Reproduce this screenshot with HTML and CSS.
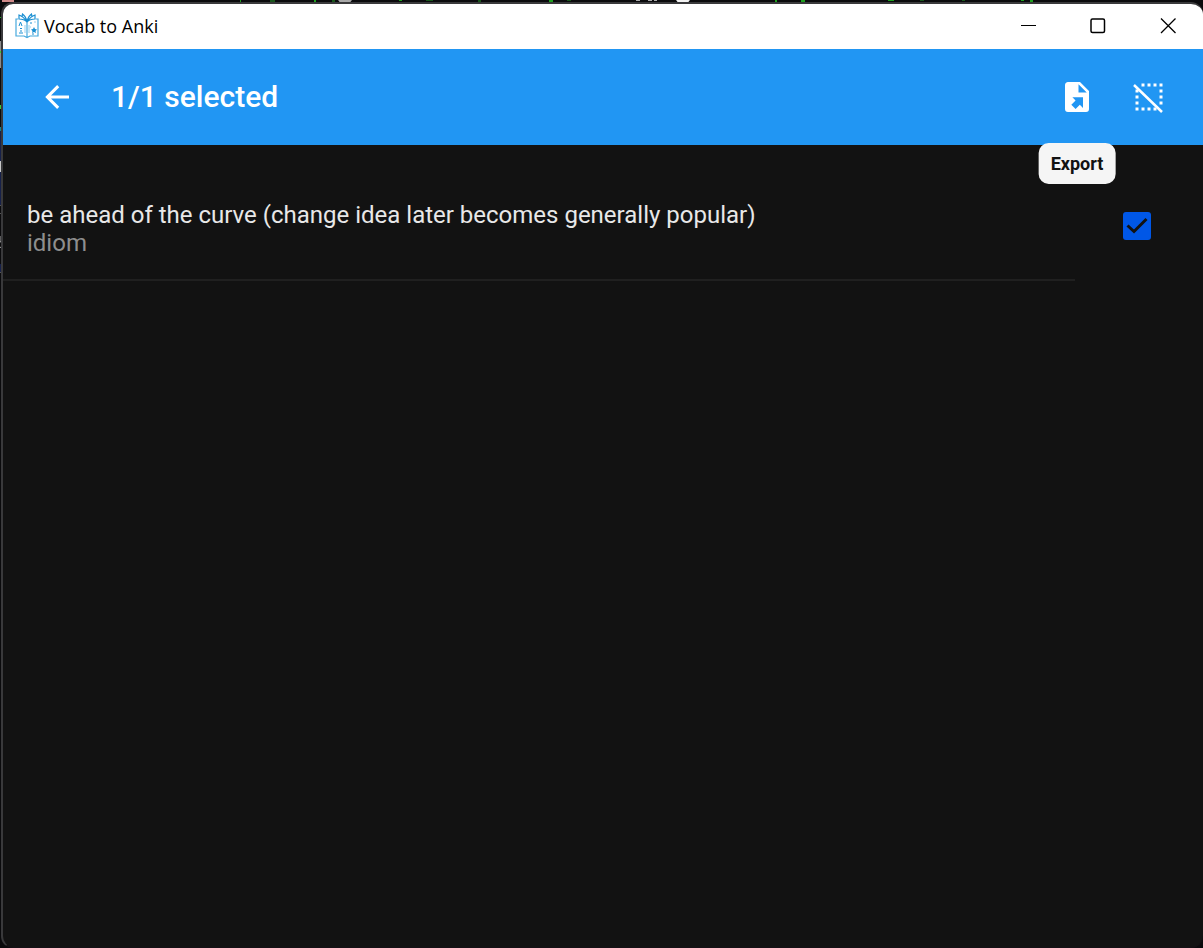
FILE: index.html
```html
<!DOCTYPE html>
<html lang="en">
<head>
<meta charset="utf-8">
<title>Vocab to Anki</title>
<meta name="viewport" content="width=device-width, initial-scale=1">
<link rel="stylesheet" href="styles.css">
</head>
<body class="desktop">
<svg class="behind behind-left" width="4" height="300" aria-hidden="true">
  <path fill="#18a818" d="M0 17h4v1H0z"/>
  <path fill="#8c8c8c" d="M0 41h4v27H0z"/>
  <path fill="#37c937" d="M0 51h3v2H0zM1 61h3v2H1zM0 105h3v4H0z"/>
  <path fill="#15808c" d="M0 127h4v4H0z"/>
  <path fill="#16204a" d="M0 131h4v75H0zM0 264h4v8H0z"/>
  <path fill="#c8c8c8" d="M0 161h2v11H0z"/>
  <path fill="#555" d="M0 205h4v1H0zM0 213h4v1H0zM0 272h4v1H0z"/>
  <path fill="none" stroke="#aaa" d="M0 236v6l3-1M0 247l3 2"/>
</svg>
<svg class="behind behind-top" width="1203" height="4" aria-hidden="true">
  <path fill="#d08a8a" d="M2 0h12v2H2z"/>
  <path fill="#1ca01c" d="M240 0h1v2h-1zM314 0h2v3h-2zM399 0h3v1h-3zM549 0h4v2h-4zM775 0h2v2h-2zM801 0h4v2h-4zM888 0h6v1h-6zM1021 0h3v1h-3zM1030 0h3v2h-3z"/>
  <path fill="#18551a" d="M270 0h5v2h-5zM332 0h3v2h-3zM426 0h7v1h-7zM478 0h3v2h-3zM567 0h4v1h-4zM920 0h4v1h-4zM962 0h3v1h-3z"/>
  <circle fill="#a8a8a8" cx="345" cy="-4" r="8"/>
  <circle fill="#f2f2f2" cx="683" cy="-4" r="8"/>
  <path fill="#aaa" d="M636 0h4v1h-4zM648 0h4v1h-4zM654 0h3v1h-3z"/>
</svg>
<div class="window">
  <header class="titlebar">
    <svg class="logo" width="24" height="26" viewBox="0 0 24 26" fill="none" stroke="#1b8fd2" stroke-width="1.2" aria-hidden="true">
      <path d="M3 6H1v17h8l3 1.500 3-1.500h8V6h-2M12 8v17" stroke="#47a9de"/>
      <path d="M12 9C10 6 7 3 4 2v4c4 0 6 1 8 3M12 9c2-3 5-6 8-7v4c-4 0-6 1-8 3M12 8C11 5 9 2 7.500 1l-.5 3M12 8c1-3 3-6 4.500-7l.5 3"/>
      <path d="M4 13l1.500-4L7 13M5 15.500h2M4 20h4M5 18h2M15 10h2M17 21h2" stroke-width="1"/>
      <path d="M19 14l1 2 2 .5-1.500 1.500.5 2-2-1-2 1 .5-2L16 16.500l2-.5z" fill="#1b8fd2" stroke="none"/>
      <path d="M19 9h2M15 14h1M10 12v8M14 12v8" stroke="#9ad0ee" stroke-width="1"/>
    </svg>
    <span class="titlebar-text">Vocab to Anki</span>
    <div class="controls">
      <button class="control" type="button" aria-label="Minimize"><svg width="16" height="16" viewBox="0 0 16 16"><path d="M1 7.500h15"/></svg></button>
      <button class="control" type="button" aria-label="Maximize"><svg width="16" height="16" viewBox="0 0 16 16"><rect x="1" y="1" width="13.500" height="13.500" rx="1.500" stroke-width="1.500"/></svg></button>
      <button class="control" type="button" aria-label="Close"><svg width="16" height="16" viewBox="0 0 16 16"><path d="M1 .5l14.500 14.500M15.500.5L1 15" stroke-width="1.300"/></svg></button>
    </div>
  </header>
  <div class="appbar">
    <button class="icon-button" type="button" aria-label="Back"><svg width="36" height="36" viewBox="0 0 24 24"><path d="M20 11v2H8l5.500 5.500-1.420 1.420L4.160 12l7.920-7.920L13.500 5.500 8 11h12z"/></svg></button>
    <h1 class="heading">1/1 selected</h1>
    <div class="actions">
      <div class="action">
        <button class="icon-button" type="button" aria-label="Export" aria-describedby="export-tip"><svg width="36" height="36" viewBox="0 0 24 24"><path d="M6 2C4.890 2 4 2.900 4 4v16a2 2 0 0 0 2 2h12a2 2 0 0 0 2-2V8l-6-6M13 3.500L18.500 9H13M8.930 12.220H16v7.070l-2.120-2.120L11.050 20l-2.830-2.830 2.830-2.820"/></svg></button>
        <span class="tooltip" id="export-tip" role="tooltip">Export</span>
      </div>
      <button class="icon-button" type="button" aria-label="Unselect all"><svg width="36" height="36" viewBox="0 0 36 36">
        <g fill="none" stroke="#fff" stroke-width="3"><path stroke-dasharray="3 3" d="M10.500 6h21M4.500 30h21M6 10.500v21M30 4.500v21"/><path stroke-width="2.500" d="M3 6l28 27"/></g>
      </svg></button>
    </div>
  </div>
  <main class="list">
    <div class="item">
      <label class="item-text" for="pick-1">
        <span class="phrase">be ahead of the curve (change idea later becomes generally popular)</span>
        <span class="kind">idiom</span>
      </label>
      <div class="item-check">
        <input class="checkbox" type="checkbox" id="pick-1" checked>
        <svg class="tick" width="28" height="28" viewBox="0 0 28 28" aria-hidden="true"><path d="M4.500 13.500l6.500 6L23.500 7"/></svg>
      </div>
    </div>
  </main>
</div>
</body>
</html>
```
FILE: styles.css
```css
* {
  box-sizing: border-box;
}

.desktop {
  margin: 0;
  min-height: 100vh;
  display: flex;
  padding: 2px 0 0 1px;
  background: #0a0a0c;
  overflow: hidden;
  font-family: Roboto, "Liberation Sans", sans-serif;
}

.behind {
  position: absolute;
  top: 0;
  left: 0;
}

.window {
  position: relative;
  flex: 1;
  display: flex;
  flex-direction: column;
  border: 2px solid #39393b;
  border-right: 0;
  border-bottom-width: 1px;
  border-bottom-color: #151015;
  border-radius: 12px;
  background: #121212;
  overflow: hidden;
}

.titlebar {
  display: flex;
  align-items: center;
  height: 45px;
  padding: 0 0 2px 12px;
  background: #fff;
  color: #000;
}

.titlebar-text {
  margin-left: 5px;
  font: 18px/24px "Open Sans", "Noto Sans", sans-serif;
}

.controls {
  display: flex;
  margin-left: auto;
}

.control {
  display: grid;
  place-items: center;
  width: 70px;
  height: 43px;
  padding: 0;
  border: 0;
  background: none;
}

.control svg {
  fill: none;
  stroke: #000;
}

.appbar {
  display: flex;
  align-items: center;
  height: 96px;
  padding: 0 18px;
  background: #2196f3;
}

.icon-button {
  display: grid;
  place-items: center;
  width: 72px;
  height: 72px;
  padding: 0;
  border: 0;
  background: none;
}

.icon-button svg {
  fill: #fff;
}

.heading {
  margin: 0 0 0 18px;
  color: #fff;
  font-size: 30px;
  font-weight: 500;
  line-height: 36px;
}

.actions {
  display: flex;
  margin-left: auto;
}

.action {
  position: relative;
}

.tooltip {
  position: absolute;
  top: 82px;
  left: 50%;
  transform: translateX(-50%);
  padding: 9px 12px;
  border-radius: 10px;
  background: #f5f5f5;
  color: #121212;
  font-size: 18px;
  font-weight: 700;
  line-height: 23px;
}

.item {
  display: flex;
  height: 136px;
  padding-top: 26px;
}

.item-text {
  flex: 1;
  display: flex;
  flex-direction: column;
  justify-content: center;
  padding: 8px 0 0 24px;
  border-bottom: 2px solid #202020;
  font-size: 24px;
  line-height: 28px;
}

.phrase {
  color: #e8e8e8;
}

.kind {
  color: #8e8e8e;
}

.item-check {
  display: grid;
  place-items: center;
  align-content: center;
  width: 128px;
  padding-right: 4px;
}

.checkbox,
.tick {
  grid-area: 1 / 1;
  width: 28px;
  height: 28px;
  margin: 0;
}

.checkbox {
  appearance: none;
  border-radius: 3px;
  background: #0057e7;
}

.tick {
  fill: none;
  stroke: #121212;
  stroke-width: 3;
  pointer-events: none;
}
```
